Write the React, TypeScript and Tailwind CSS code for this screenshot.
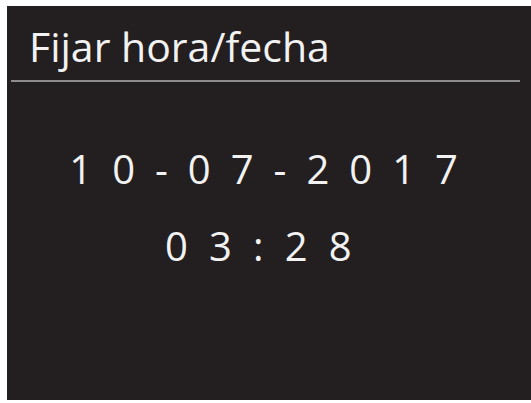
import React from "react";

const App = () => {
  return (
    <div className="w-[531px] h-[403px] bg-white pl-[7px] pt-[6px] pb-[3px]">
      <div
        className="h-full bg-[#231f20] flex flex-col text-[#f2f2f2]"
        style={{ fontFamily: '"Open Sans", sans-serif' }}
      >
        {/* Title bar */}
        <div className="h-[74px] flex items-end pl-[22px] pb-[13px]">
          <h1 className="text-[41px] leading-none font-medium">Fijar hora/fecha</h1>
        </div>
        <div className="ml-[4px] mr-[11px] h-[2px] bg-[#8c8c8c]" />

        {/* Date and time */}
        <div className="flex flex-col items-center pt-[67px] pr-[6px] gap-[37px]">
          <div className="text-[40px] leading-none font-medium tracking-[0.12em] whitespace-pre">
            1 0 - 0 7 - 2 0 1 7
          </div>
          <div className="mr-[10px] text-[40px] leading-none font-medium tracking-[0.135em] whitespace-pre">
            0 3 : 2 8
          </div>
        </div>
      </div>
    </div>
  );
};

export default App;
